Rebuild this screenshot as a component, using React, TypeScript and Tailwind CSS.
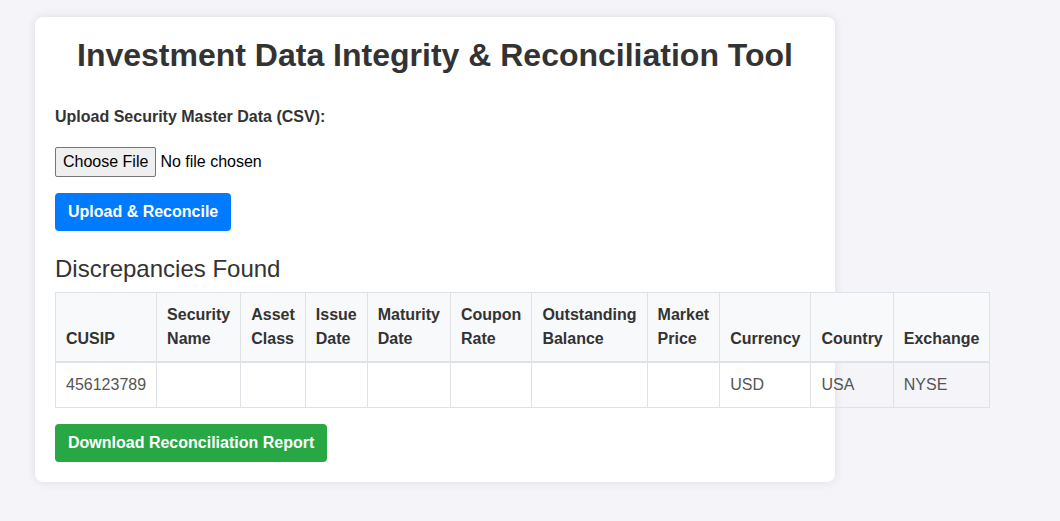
import React from 'react';

const columns = [
  'CUSIP',
  'Security Name',
  'Asset Class',
  'Issue Date',
  'Maturity Date',
  'Coupon Rate',
  'Outstanding Balance',
  'Market Price',
  'Currency',
  'Country',
  'Exchange',
];

const rows = [['456123789', '', '', '', '', '', '', '', 'USD', 'USA', 'NYSE']];

export default function App() {
  return (
    <div className="min-h-screen bg-[#f4f4f9] pl-[35px] pt-[17px] font-['Liberation_Sans',Arial,sans-serif] text-[#333]">
      <div className="w-[800px] rounded-lg bg-white p-5 shadow-[0_0_10px_rgba(0,0,0,0.1)]">
        <h1 className="mb-[32px] text-center text-[32px] font-bold leading-[36px]">
          Investment Data Integrity &amp; Reconciliation Tool
        </h1>

        <label className="block text-base font-bold leading-6">Upload Security Master Data (CSV):</label>

        <div className="mt-[18px] flex h-[30px] items-center text-base">
          <span className="flex h-[30px] items-center rounded-[2px] border border-[#767676] bg-[#efefef] px-[7px] text-black">
            Choose File
          </span>
          <span className="ml-[4px] text-black">No file chosen</span>
        </div>

        <button className="mt-4 rounded bg-[#007bff] px-[13px] py-[10px] text-base font-bold leading-[18px] text-white">
          Upload &amp; Reconcile
        </button>

        <h2 className="mt-6 text-2xl font-normal leading-[28px]">Discrepancies Found</h2>

        <table className="mt-[9px] w-full border-collapse border border-[#dee2e6] text-base leading-6">
          <thead>
            <tr className="bg-[#f8f9fa]">
              {columns.map(col => (
                <th
                  key={col}
                  className="border border-b-2 border-[#dee2e6] p-[10px] text-left align-bottom font-bold text-[#333]"
                >
                  {col}
                </th>
              ))}
            </tr>
          </thead>
          <tbody>
            {rows.map((row, i) => (
              <tr key={i}>
                {row.map((cell, j) => (
                  <td key={j} className="border border-[#dee2e6] p-[10px] align-top text-[#555]">
                    {cell}
                  </td>
                ))}
              </tr>
            ))}
          </tbody>
        </table>

        <button className="mt-4 rounded bg-[#28a745] px-[13px] py-[10px] text-base font-bold leading-[18px] text-white">
          Download Reconciliation Report
        </button>
      </div>
    </div>
  );
}
